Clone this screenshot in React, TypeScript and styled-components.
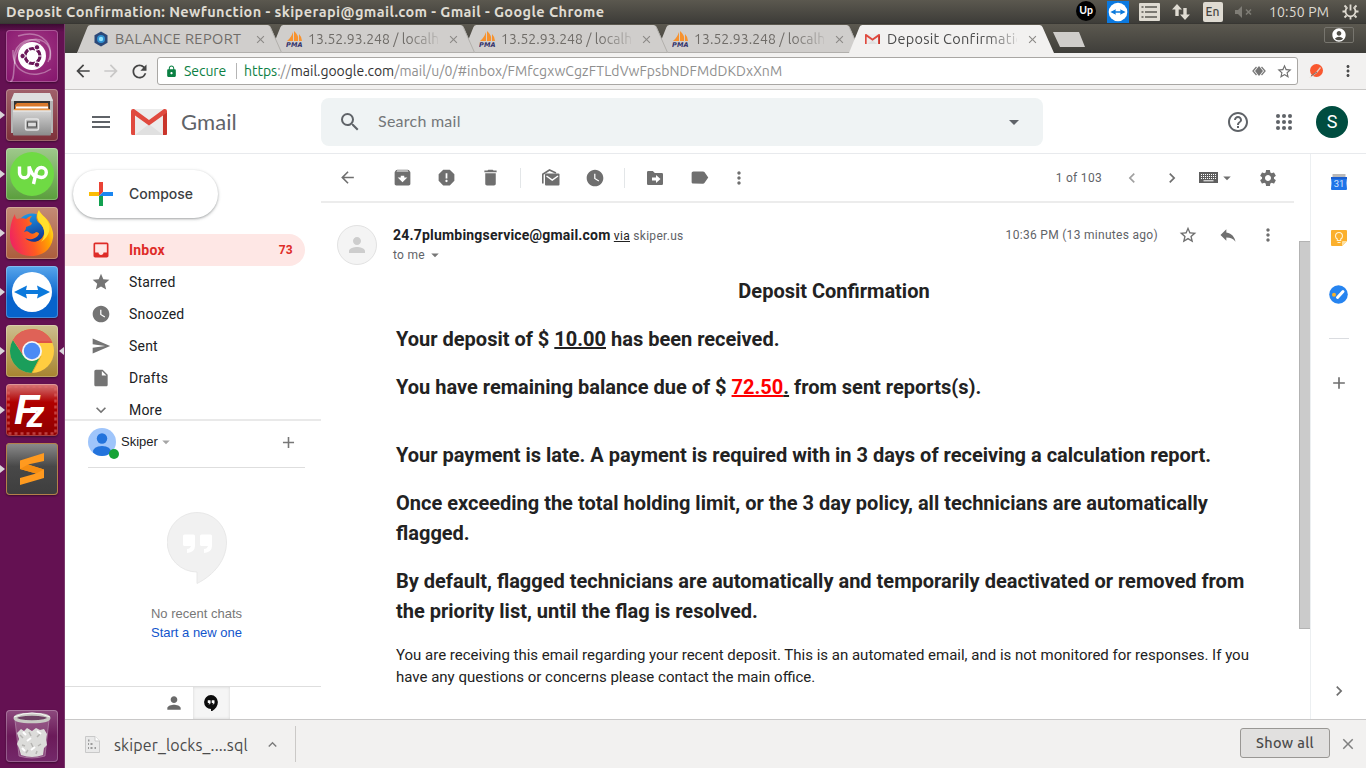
import React from 'react';
import styled, { createGlobalStyle } from 'styled-components';
import {
  MdAccountCircle, MdAdd, MdArchive, MdArrowBack, MdArrowDropDown, MdArrowForward, MdChevronLeft, MdChevronRight,
  MdClose, MdDelete, MdExpandLess, MdExpandMore, MdHelpOutline, MdInbox, MdInsertDriveFile, MdLabel,
  MdLock, MdMenu, MdMoreVert, MdPerson, MdRefresh, MdReply, MdReport, MdSearch, MdSend, MdSettings, MdStar,
  MdStarBorder, MdWatchLater,
} from 'react-icons/md';

const uiFont = '"Ubuntu", "Noto Sans", sans-serif';
const productFont = '"Product Sans", Lato, sans-serif';

const GlobalStyle = createGlobalStyle`
  * { box-sizing: border-box; }
  body { margin: 0; overflow: hidden; font-family: Roboto, sans-serif; color: #202124; }
  svg { display: block; flex: none; }
  p { margin: 0; }
`;

const Desktop = styled.div`
  display: grid;
  grid-template: 24px 744px / 65px 1301px;
  width: 1366px;
  height: 768px;
  overflow: hidden;
  background: #fff;
`;

/* ---------- system panel ---------- */
const Panel = styled.header`
  grid-column: 1 / 3;
  display: flex;
  align-items: center;
  padding: 0 4px 0 6px;
  background: linear-gradient(#5b584f, #3d3c38);
  border-bottom: 1px solid #383733;
  font-family: ${uiFont};
  color: #dfdbd2;
`;
const WindowTitle = styled.span`
  flex: 1;
  font-size: 14.5px;
  font-weight: 700;
  line-height: 22px;
  letter-spacing: 0.4px;
  white-space: nowrap;
`;
const Indicator = styled.span<{ $w?: number }>`
  display: flex;
  justify-content: center;
  align-items: center;
  width: ${p => p.$w ?? 31.6}px;
  height: 24px;
  font-size: 14px;
  letter-spacing: 0.15px;
  white-space: nowrap;
`;
const UpBadge = styled.span`
  width: 20px;
  height: 20px;
  margin-bottom: 2px;
  border-radius: 50%;
  background: #000;
  color: #fff;
  font: 700 10.5px/18px Lato, sans-serif;
  text-align: center;
`;
const Language = styled.span`
  width: 20px;
  height: 20px;
  border-radius: 2px;
  background: #dfdbd2;
  color: #45443f;
  font: 500 12px/20px ${uiFont};
  text-align: center;
`;

/* ---------- launcher ---------- */
const Launcher = styled.nav`
  display: flex;
  flex-direction: column;
  gap: 7px;
  padding: 6px 0 6px;
  background: linear-gradient(#3d0a33, #641152 8px);
  border-right: 1px solid #7b3a6d;
`;
const LaunchRow = styled.div<{ $last?: boolean }>`
  display: flex;
  align-items: center;
  justify-content: space-between;
  height: 52px;
  margin-top: ${p => (p.$last ? 'auto' : 0)};
`;
const Running = styled.i<{ $on?: boolean }>`
  width: 5px;
  height: 8px;
  visibility: ${p => (p.$on ? 'visible' : 'hidden')};
  background: #d9d4d8;
  clip-path: polygon(0 0, 100% 50%, 0 100%);
`;
const Focused = styled(Running)`
  clip-path: polygon(100% 0, 0 50%, 100% 100%);
`;
const Tile = styled.div<{ $bg: string; $edge?: string }>`
  width: 52px;
  height: 52px;
  overflow: hidden;
  border-radius: 4px;
  background: ${p => p.$bg};
  box-shadow: inset 0 0 0 1px ${p => p.$edge ?? 'rgba(255,255,255,.25)'}, 0 1px 2px rgba(0, 0, 0, 0.4);
`;

/* ---------- browser chrome ---------- */
const Browser = styled.div`
  display: flex;
  flex-direction: column;
  height: 744px;
  min-width: 0;
`;
const TabStrip = styled.div`
  display: flex;
  flex: none;
  height: 29px;
  padding: 1px 11px 0 12px;
  background: linear-gradient(#5b584f, #3f3e3a);
  font-family: ${uiFont};
`;
const TabBox = styled.div<{ $z: number; $active?: boolean }>`
  position: relative;
  z-index: ${p => p.$z};
  display: flex;
  align-items: center;
  width: 205px;
  height: 28px;
  margin-right: -12px;
  padding: 0 15px 0 16px;
  color: ${p => (p.$active ? '#4c4c4c' : '#6f6c68')};
`;
const TabShape = styled.svg`
  position: absolute;
  inset: 0;
  z-index: -1;
`;
const TabLabel = styled.span<{ $tight?: boolean }>`
  flex: 1;
  min-width: 0;
  margin: 0 8px 0 ${p => (p.$tight ? 5 : 6)}px;
  overflow: hidden;
  font-size: ${p => (p.$tight ? 14 : 14.5)}px;
  line-height: 26px;
  letter-spacing: ${p => (p.$tight ? 0.05 : 0.42)}px;
  white-space: nowrap;
  mask-image: linear-gradient(90deg, #000 98px, rgba(0, 0, 0, 0.25) 129px, transparent 130px);
`;
const PlainLabel = styled(TabLabel)`
  mask-image: none;
`;
const ActiveLabel = styled(TabLabel)`
  margin-left: 7px;
  letter-spacing: 0.25px;
`;
const NewTab = styled.div`
  width: 32px;
  height: 15px;
  margin: 7px 0 0 11px;
  background: #cfcdca;
  clip-path: polygon(0 0, 26px 0, 100% 100%, 7px 100%);
`;
const ProfileButton = styled.div`
  display: flex;
  justify-content: center;
  align-items: center;
  width: 30px;
  height: 16px;
  margin: 2px 1px 0 auto;
  border: 1px solid #77756e;
  border-radius: 2px;
  color: #fff;
`;
const Toolbar = styled.div`
  display: flex;
  align-items: center;
  flex: none;
  height: 37px;
  padding: 0 9px 0 8px;
  background: #f2f1f0;
  border-bottom: 1px solid #cac8c6;
  color: #4b4b4b;
`;
const NavIcon = styled.span<{ $dim?: boolean }>`
  display: flex;
  width: 28px;
  color: ${p => (p.$dim ? '#c9c8c7' : '#454545')};
`;
const Omnibox = styled.div`
  display: flex;
  align-items: center;
  width: 1141px;
  height: 28px;
  padding: 0 5px 0 7px;
  background: #fff;
  border: 1px solid #a9a7a4;
  border-radius: 3px;
  font: 14px/26px ${uiFont};
  white-space: nowrap;
`;
const Secure = styled.span`
  width: 53px;
  margin-left: 6px;
  border-right: 1px solid #b5b5b5;
  line-height: 16px;
  letter-spacing: -0.05px;
  color: #0b8043;
`;
const Url = styled.span`
  flex: 1;
  margin-left: 7px;
  color: #333;
  letter-spacing: -0.03px;
`;
const Scheme = styled.span`color: #0b8043;`;
const Muted = styled.span`color: #8f8f8f;`;
const Path = styled(Muted)`letter-spacing: 0.08px;`;
const Extensions = styled.div`
  display: flex;
  flex: 1;
  justify-content: space-between;
  align-items: center;
  padding-left: 11px;
`;

/* ---------- Gmail ---------- */
const Page = styled.div`
  display: flex;
  flex-direction: column;
  height: 629px;
  overflow: hidden;
`;
const GmailHeader = styled.div`
  display: flex;
  align-items: center;
  flex: none;
  height: 64px;
  border-bottom: 1px solid #e8eaed;
  color: #5f6368;
`;
const Brand = styled.div`
  display: flex;
  align-items: center;
  width: 256px;
  padding: 1px 0 0 24px;
`;
const BrandName = styled.span`
  margin-left: 14px;
  font: 22px/28px ${productFont};
  letter-spacing: 0.1px;
`;
const SearchBox = styled.div`
  display: flex;
  align-items: center;
  width: 722px;
  height: 48px;
  padding: 0 17px;
  border-radius: 8px;
  background: #eff3f4;
  font: 16px/24px ${productFont};
  letter-spacing: 0.25px;
`;
const SearchText = styled.span`
  flex: 1;
  margin-left: 16px;
  padding-bottom: 2px;
  color: #747779;
`;
const HeaderActions = styled.div`
  display: flex;
  align-items: center;
  margin-left: auto;
  padding-right: 18px;
`;
const Account = styled.div`
  width: 32px;
  height: 32px;
  margin-left: 9px;
  border-radius: 50%;
  background: #004d40;
  color: #fff;
  font: 18px/32px Roboto, sans-serif;
  text-align: center;
`;
const Columns = styled.div`
  display: grid;
  grid-template-columns: 256px 990px 55px;
  flex: 1;
  min-height: 0;
`;
const Sidebar = styled.aside`
  display: flex;
  flex-direction: column;
  min-height: 0;
`;
const Compose = styled.button`
  display: flex;
  align-items: center;
  flex: none;
  width: 145px;
  height: 48px;
  margin: 16px 0 16px 8px;
  padding: 0 0 1px 16px;
  border: 0;
  border-radius: 24px;
  background: #fff;
  box-shadow: 0 1px 2px rgba(60, 64, 67, 0.32), 0 1px 3px 1px rgba(60, 64, 67, 0.14);
  color: #3c4043;
  font: 500 14px/20px Inter, sans-serif;
  gap: 16px;
`;
const Folders = styled.div`
  height: 187px;
  flex: none;
  overflow: hidden;
  border-bottom: 2px solid #e9e9e9;
`;
const Folder = styled.div<{ $active?: boolean }>`
  display: flex;
  align-items: center;
  width: 240px;
  height: 32px;
  padding: 0 12px 0 26px;
  border-radius: 0 16px 16px 0;
  background: ${p => (p.$active ? '#fee7e5' : 'transparent')};
  color: ${p => (p.$active ? '#de2c28' : '#202124')};
  font-size: 14px;
  font-weight: ${p => (p.$active ? 700 : 400)};
  letter-spacing: 0.2px;
  & > svg { color: ${p => (p.$active ? '#de2c28' : '#747474')}; }
`;
const FolderName = styled.span`flex: 1; margin-left: 18px;`;
const Count = styled.span`font-size: 12px; letter-spacing: 0.3px;`;
const ChatHeader = styled.div`
  display: flex;
  align-items: center;
  flex: none;
  width: 217px;
  height: 47px;
  margin-left: 23px;
  padding-bottom: 4px;
  border-bottom: 1px solid #dedede;
  font: 13px/18px "Liberation Sans", Arial, sans-serif;
`;
const ChatAvatar = styled.span`
  position: relative;
  display: block;
  width: 28px;
  height: 28px;
  margin-right: 5px;
`;
const Presence = styled.i`
  position: absolute;
  right: -3px;
  bottom: -3px;
  width: 10px;
  height: 10px;
  border-radius: 50%;
  background: #16a336;
`;
const ChatEmpty = styled.div`
  display: flex;
  flex: 1;
  flex-direction: column;
  align-items: center;
  padding: 44px 0 0 7px;
  font: 13px/19px "Liberation Sans", Arial, sans-serif;
  color: #777;
`;
const ChatText = styled.span`margin-top: 20px;`;
const ChatLink = styled.a`color: #1155cc;`;
const ChatTabs = styled.div`
  display: flex;
  justify-content: center;
  flex: none;
  height: 33px;
  border-top: 1px solid #dedede;
`;
const ChatTab = styled.div<{ $active?: boolean }>`
  display: flex;
  justify-content: center;
  align-items: center;
  width: 37px;
  margin-left: ${p => (p.$active ? 0 : -1)}px;
  background: ${p => (p.$active ? '#f5f5f5' : 'none')};
  box-shadow: ${p => (p.$active ? 'inset 0 0 3px #d5d5d5' : 'none')};
  color: ${p => (p.$active ? '#000' : '#6a6a6a')};
`;

const Mail = styled.main`
  position: relative;
  border-right: 1px solid #eceff1;
  min-width: 0;
`;
const Actions = styled.div`
  display: flex;
  align-items: center;
  width: 973px;
  height: 49px;
  padding: 0 4px;
  border-bottom: 2px solid #ececec;
  color: #6f6f6f;
`;
const Slot = styled.span<{ $w?: number; $gap?: number; $tone?: string }>`
  display: flex;
  justify-content: center;
  align-items: center;
  flex: none;
  width: ${p => p.$w ?? 44}px;
  margin-left: ${p => p.$gap ?? 0}px;
  color: ${p => p.$tone ?? '#6f6f6f'};
`;
const Divider = styled.i`
  width: 1px;
  height: 20px;
  margin: 0 8px 0 7px;
  background: #e3e6e8;
`;
const FirstDivider = styled(Divider)`margin-left: 8px;`;
const Counter = styled.span`
  margin: 0 10px 0 auto;
  font-size: 12px;
  letter-spacing: 0.3px;
  color: #5f6368;
`;
const MessageHead = styled.div`
  display: flex;
  width: 973px;
  height: 60px;
  padding: 22px 6px 0 16px;
  font-size: 12px;
  letter-spacing: 0.3px;
  color: #5f6368;
`;
const SenderAvatar = styled.div`
  display: flex;
  justify-content: center;
  align-items: center;
  width: 40px;
  height: 40px;
  border: 1px solid #e2e2e2;
  border-radius: 50%;
  background: #f4f4f4;
  color: #cdcdcd;
`;
const Sender = styled.div`
  flex: 1;
  margin-left: 16px;
  line-height: 20px;
`;
const Address = styled.b`
  font-size: 14px;
  letter-spacing: 0.2px;
  color: #202124;
`;
const Via = styled.u`color: #222;`;
const Recipient = styled.div`
  display: flex;
  align-items: center;
  gap: 1px;
  height: 18px;
`;
const HeadTools = styled.div`
  display: flex;
  align-items: center;
  height: 20px;
`;
const Body = styled.article`
  width: 876px;
  margin: 13px 0 0 75px;
  color: #222;
`;
const Strong = styled.p<{ $center?: boolean; $gap?: number }>`
  margin-bottom: ${p => p.$gap ?? 18}px;
  font-size: 20px;
  font-weight: 700;
  line-height: 30px;
  text-align: ${p => (p.$center ? 'center' : 'left')};
`;
const Due = styled.u`color: #f00;`;
const Footnote = styled.p`
  font-size: 15px;
  line-height: 22px;
`;
const ScrollThumb = styled.i`
  position: absolute;
  top: 87px;
  right: 0;
  width: 11px;
  height: 388px;
  background: #cbcbcb;
  border: solid #b3b3b3;
  border-width: 1px 0 1px 1px;
`;
const AddOns = styled.aside`
  display: flex;
  flex-direction: column;
  align-items: center;
  padding: 18px 0;
  color: #6f6f6f;
`;
const AddOnSlot = styled.div`
  display: flex;
  align-items: center;
  height: 20px;
  margin-bottom: 36px;
`;
const AddOnRule = styled.i`
  width: 20px;
  height: 1px;
  margin: -2px 0 34px;
  background: #dadce0;
`;
const Collapse = styled.div`margin-top: auto;`;

/* ---------- download shelf ---------- */
const Shelf = styled.footer`
  display: flex;
  align-items: center;
  flex: none;
  height: 49px;
  padding: 0 9px 0 20px;
  background: #f2f1f0;
  border-top: 1px solid #c9c8c8;
  color: #4b4b4b;
  font-family: ${uiFont};
`;
const FileName = styled.span`
  margin: 1px 16px 0 14px;
  font-size: 16px;
  letter-spacing: 0.13px;
`;
const ShelfRule = styled.i`
  width: 1px;
  height: 36px;
  margin-left: 14px;
  background: #cbc9c7;
`;
const ShowAll = styled.button`
  width: 90px;
  height: 30px;
  margin: 0 9px 2px auto;
  padding: 0;
  border: 1px solid #999794;
  border-radius: 3px;
  background: #e1e0df;
  color: #4b4b4b;
  font: 500 14.5px/26px ${uiFont};
  letter-spacing: 0.35px;
`;

/* ---------- drawings ---------- */
const TeamArrows = ({ size, square }: { size: number; square?: boolean }) => (
  <svg width={size} height={size} viewBox="0 0 52 52">
    {square && <rect width="52" height="52" fill="#0b79e0" />}
    <circle cx="26" cy="26" r={square ? 22 : 20} fill="#fff" />
    <path d="M8 26l13-6.5-1 4.500h12l-1-4.500L44 26l-13 6.500 1-4.500H20l1 4.500z" fill="#0b79dc" />
  </svg>
);
const Ubuntu = () => (
  <svg width="52" height="52" viewBox="0 0 52 52">
    <g fill="none" stroke="#fff" strokeOpacity=".35" strokeWidth="1.500">
      <path d="M4 52C12 50 2 22 20 12c14-7 27 1 24 18" />
      <path d="M7 20c-1 24 22 30 38 19M12 6c26-8 38 12 30 26" />
      <path d="M9 34C4 18 20 4 34 12" />
    </g>
    <circle cx="26" cy="26" r="14" fill="#fff" />
    <circle cx="26.500" cy="26" r="7.500" fill="none" stroke="#6b1759" strokeWidth="3.200" />
    <path d="M26.500 26L32 35.500M26.500 26H15M26.500 26L32 16.500" stroke="#fff" strokeWidth="1.200" />
    <path d="M26.500 26H38M26.500 26l-6-10M26.500 26l-6 10" stroke="#fff" strokeWidth="1.200" />
    <circle cx="26.500" cy="26" r="5.500" fill="#fff" />
    <g fill="#6b1759" stroke="#fff" strokeWidth="1"><circle cx="16.600" cy="26" r="2.700" /><circle cx="31" cy="17.300" r="2.700" /><circle cx="31" cy="34.700" r="2.700" /></g>
  </svg>
);
const Files = () => (
  <svg width="52" height="52" viewBox="0 0 52 52">
    <defs><linearGradient id="cab" x2="0" y2="1"><stop stopColor="#d4d4d4" /><stop offset="1" stopColor="#8b8b8b" /></linearGradient></defs>
    <path d="M8 5h36l3 6v33H5V11z" fill="#b5b5b5" />
    <path d="M8 4h36l3 8H5z" fill="#dedede" />
    <rect x="8" y="12" width="36" height="11" fill="#333" />
    <path d="M9 16l2-2h31l1 9H9z" fill="#d9792c" />
    <rect x="10" y="17.500" width="32" height="2" fill="#fff" />
    <path d="M8 20h36v3H8z" fill="#e8933f" />
    <rect x="7" y="21.500" width="38" height="25" rx="1" fill="url(#cab)" />
    <path d="M7 22h38" stroke="#eee" />
    <rect x="19.500" y="30" width="13" height="11" rx="1.500" fill="none" stroke="#e5e5e5" strokeWidth="1.500" />
    <rect x="21.500" y="33" width="9" height="5" fill="#ddd" stroke="#555" strokeWidth="1.200" />
  </svg>
);
const Upwork = () => (
  <svg width="52" height="52" viewBox="0 0 52 52">
    <circle cx="26" cy="26" r="22" fill="#6fda44" />
    <path d="M13.500 18.500v6.500a4.800 4.800 0 0 0 9.600 0v-6.500c2 6 4 9.500 7 11M27.500 36l2.500-11c.8-3.800 3-5.500 5.300-5.500a5 5 0 1 1 0 10c-2.800 0-5-1.500-7-4" fill="none" stroke="#fff" strokeWidth="3.400" />
  </svg>
);
const Firefox = () => (
  <svg width="52" height="52" viewBox="0 0 52 52">
    <defs>
      <linearGradient id="fox" x1="0" y1=".6" x2="1" y2=".3"><stop stopColor="#f0255f" /><stop offset=".45" stopColor="#ff5a22" /><stop offset=".8" stopColor="#ffa400" /><stop offset="1" stopColor="#ffe226" /></linearGradient>
      <linearGradient id="globe" x2=".3" y2="1"><stop stopColor="#1ea2f2" /><stop offset="1" stopColor="#12348f" /></linearGradient>
    </defs>
    <circle cx="26" cy="22" r="15.500" fill="url(#globe)" />
    <path d="M9 7c0 3 1 4 2 5 3-1 7-1 9 0 2-2 4-3 6-3-2 2-3 4-2 6l2 1-1 2-5 2c0 3-1 3-2 5 2-1 4-1 6 1 2 1 4 1 6-1 2 0 3 1 3 2-3 6-11 6-14 4 6 6 16 5 19-4 1-5-2-9-6-12-3-4-1-9 1-12 1 5 8 7 11 14 2 5 4 9 3 14-2 13-12 18-22 18C12 49 3 40 4 27c0-8 2-15 5-20z" fill="url(#fox)" />
    <path d="M33 3c-3 5-2 9 1 13 5 5 6 13 1 19 9-6 10-14 7-20-2-5-8-8-9-12z" fill="#ffe02d" />
  </svg>
);
const Chrome = () => (
  <svg width="52" height="52" viewBox="0 0 52 52">
    <circle cx="26" cy="26" r="22" fill="#ffcd40" />
    <path d="M6.950 15A22 22 0 0 1 46.500 18H26a9 9 0 0 0-8.500 5z" fill="#dd5347" />
    <path d="M6.950 15A22 22 0 0 0 26 48l8-15-4 2a10 10 0 0 1-13-5z" fill="#1b9e5b" />
    <path d="M26 16h19.500a22 22 0 0 0-38.500-1l10 15z" fill="#df6257" />
    <path d="M26 48l9-17" stroke="#e0ad2e" />
    <circle cx="26" cy="26" r="10" fill="#f5f5f5" />
    <circle cx="26" cy="26" r="8.200" fill="#4c8bf5" />
  </svg>
);
const FileZilla = () => (
  <svg width="52" height="52" viewBox="0 0 52 52">
    <rect x="2.500" y="2.500" width="47" height="47" fill="none" stroke="#e06a6a" strokeWidth="2.500" strokeDasharray="3 3" opacity=".6" />
    <text x="8" y="40" fill="#fff" fontFamily="'Liberation Sans', Arial, sans-serif" fontSize="42" fontWeight="700" fontStyle="italic">
      F<tspan x="20.500" y="43" fontSize="36">z</tspan>
    </text>
  </svg>
);
const Sublime = () => (
  <svg width="52" height="52" viewBox="0 0 52 52">
    <path d="M38 10L14 17.500V26l16 4.500L14 35v7l24-7v-8.500L22 21.500 38 18z" fill="#ff9a1f" />
    <path d="M38 26.500L22 21.500l-8 4.500 16 4.500z" fill="#f58d12" />
  </svg>
);
const Trash = () => (
  <svg width="52" height="52" viewBox="0 0 52 52">
    <path d="M9 10l4 36q13 4 26 0l4-36z" fill="#b98eae" fillOpacity=".35" stroke="#c9a9c1" strokeOpacity=".5" />
    <path d="M11 23l4-4 3 2 3-3 5 3 4-3 4 2 4-1 3 5-1 6 1 5-3 3-1 7q-11 4-22 0l-2-7-2-4 2-5z" fill="#dcdcda" />
    <path d="M14 25l3 3M23 22l2 4M34 24l-3 3M16 35l3 1M25 33l2 4M35 34l-3 2M20 43l2-3M30 44l1-3" stroke="#b5b4b1" strokeWidth="1.500" fill="none" />
    <path d="M17 22l3 3M31 21l4 3M21 31l4-3M25 40l4-3M16 38l3 3" stroke="#fff" strokeWidth="2" />
    <ellipse cx="26" cy="8" rx="17" ry="3.800" fill="#6d4163" stroke="#c9c9c4" strokeWidth="3" />
    <path d="M8 7q18-8 36 0" stroke="#f6f6f4" fill="none" />
  </svg>
);
const GmailMark = ({ width }: { width: number }) => (
  <svg width={width} height={width * 0.722} viewBox="0 0 36 26">
    <path d="M2 0h32v26H2z" fill="#ececec" />
    <path d="M4 26l14-11 14 11z" fill="#e0e0e0" />
    <path d="M0 2v22.500Q0 26 1.500 26H4V6.500L18 16.500 32 6.500V26h2.500q1.500 0 1.500-1.500V2Q36 0 34 0h-1L18 11 3 0H2Q0 0 0 2z" fill="#e04a3f" />
    <path d="M32 6.500l4-3V24.500Q36 26 34.500 26H32z" fill="#c9352b" />
  </svg>
);
const PmaMark = () => (
  <svg width="17" height="16" viewBox="0 0 17 16">
    <path d="M7 1v9H1Q5 7 7 1zM8 0q5 4 4 10H8zM13 3q3 3 3 7h-3z" fill="#f7922e" />
    <text x="0" y="15.500" fontFamily="'DejaVu Sans', sans-serif" fontSize="6.500" fontWeight="700" fontStyle="italic" fill="#33336b" textLength="16.500">PMA</text>
  </svg>
);
const HexMark = () => (
  <svg width="16" height="16" viewBox="0 0 16 16">
    <path d="M8 .5l6.500 3.750v7.500L8 15.500 1.500 11.750v-7.500z" fill="#2c4878" />
    <circle cx="8" cy="8" r="4" fill="#2f8fd0" /><circle cx="8" cy="8" r="2.200" fill="#8fe3ff" />
  </svg>
);
const ComposePlus = () => (
  <svg width="24" height="24" viewBox="0 0 24 24">
    <path d="M10 0h4v10l-4 4z" fill="#ea4335" /><path d="M0 10h10v4H0z" fill="#fbbc04" />
    <path d="M14 10h10v4H10z" fill="#1a86f0" /><path d="M10 14h4v10h-4z" fill="#12a150" />
  </svg>
);
const Apps = () => (
  <svg width="18" height="18" viewBox="0 0 18 18" fill="#5f6368">
    {[3, 9, 15].map(y => [3, 9, 15].map(x => <circle key={`${x}${y}`} cx={x} cy={y} r="2.050" />))}
  </svg>
);
const Unread = () => (
  <svg width="20" height="20" viewBox="0 0 20 20">
    <path d="M1.800 15.500V6.300L8.500 2l6.500 3" fill="none" stroke="#6f6f6f" strokeWidth="1.600" />
    <path d="M5 5.500h12.500q1 0 1 1v10q0 1-1 1H5q-1 0-1-1v-10q0-1 1-1z" fill="#6f6f6f" />
    <path d="M5.500 8l5.750 4L17 8" fill="none" stroke="#fff" strokeWidth="1.500" />
  </svg>
);
const MoveTo = () => (
  <svg width="20" height="20" viewBox="0 0 20 20">
    <path d="M3.300 3h4.500l2 2h7q1.200 0 1.200 1.200v9.600q0 1.200-1.200 1.200H3.300Q2 17 2 15.800V4.200Q2 3 3.300 3z" fill="#6f6f6f" />
    <path d="M7 9.500h4V7l4.500 4-4.500 4v-2.500H7z" fill="#fff" />
  </svg>
);
const Keyboard = () => (
  <svg width="19" height="11" viewBox="0 0 19 11">
    <rect width="19" height="11" fill="#5f5f5f" />
    <path d="M2 2.500h15M2 4.500h15M2 6.500h15" stroke="#fff" strokeWidth="1" strokeDasharray="1 1" />
    <path d="M4.500 8.800h10" stroke="#fff" strokeWidth="1" />
  </svg>
);
const Calendar = () => (
  <svg width="16" height="17" viewBox="0 0 16 17">
    <path d="M1.500 0h13v4h-13z" fill="#b9b9b9" />
    <path d="M0 4q0-1 1-1h14q1 0 1 1l-.5 5 .5 6q0 1-1 1H1q-1 0-1-1l.5-6z" fill="#1f74e8" />
    <path d="M0 3h16v2H0z" fill="#1a5fd0" />
    <text x="8" y="13" textAnchor="middle" fontFamily="Roboto, sans-serif" fontSize="9.500" fill="#d5e6ff">31</text>
  </svg>
);
const Keep = () => (
  <svg width="16" height="16" viewBox="0 0 16 16">
    <path d="M1 0h14q1 0 1 1v10l-5 5H1q-1 0-1-1V1q0-1 1-1z" fill="#fbb02d" /><path d="M11 16v-4q0-1 1-1h4z" fill="#fde0a0" />
    <path d="M6.300 10.500V9a3.500 3.500 0 1 1 3.400 0v1.500zM6.500 12.500h3" fill="none" stroke="#fff3d6" strokeWidth="1.100" />
  </svg>
);
const Tasks = () => (
  <svg width="19" height="19" viewBox="0 0 19 19">
    <circle cx="9.500" cy="9.500" r="9.300" fill="#2684f0" /><path d="M8.500 12.500l5.500-6" stroke="#fff" strokeWidth="3" strokeLinecap="round" />
    <circle cx="5" cy="9.700" r="2" fill="#f8b32c" />
  </svg>
);
const Hangouts = ({ width, fill, quote, stroke = 'none' }: { width: number; fill: string; quote: string; stroke?: string }) => (
  <svg width={width} height={width * 1.2} viewBox="0 0 60 72">
    <path d="M30 .5a29.500 29.500 0 0 0 0 59.500v11.500C47 63 59.500 48 59.500 30A29.500 29.500 0 0 0 30 .5z" fill={fill} stroke={stroke} />
    {[16, 33].map(x => (
      <path key={x} d={`M${x + 1.5} 22.500h9q1.500 0 1.500 1.500v10q0 6-8 7v-4q3 0 4-3h-6.500q-1.500 0-1.500-1.500v-8.500q0-1.500 1.500-1.500z`} fill={quote} />
    ))}
  </svg>
);
const Postman = () => (
  <svg width="14" height="15" viewBox="0 0 14 15">
    <circle cx="7.500" cy="6.500" r="6.500" fill="#f9582f" />
    <path d="M0 14l7-6 4-5 1 1-4 5-5 3.500z" fill="#e8c9bd" /><path d="M2 12l6-4" stroke="#7a6a64" />
  </svg>
);
const Viewer = () => (
  <svg width="14" height="12" viewBox="0 0 14 12">
    <path d="M4.500 2L1 6l3.500 4M9.500 2L13 6l-3.500 4" fill="none" stroke="#7b7b7b" strokeWidth="1.300" />
    <path d="M7 1l4 5-4 5-4-5z" fill="#757575" />
  </svg>
);
const SqlFile = () => (
  <svg width="15" height="17" viewBox="0 0 15 17">
    <path d="M.5.500h9.500l4.500 4.500v11.500H.5z" fill="#e9e9e9" stroke="#c9c9c9" /><path d="M10 .5V5h4.500" fill="#fff" stroke="#c9c9c9" />
    <path d="M3 4.500h1.500M3 8h1M5.500 8h2M3 12h1M5.500 12h2M9.500 12h1.500" stroke="#9a9a9a" strokeWidth="2" />
  </svg>
);
const ListIcon = () => (
  <svg width="21" height="20" viewBox="0 0 21 20">
    <rect y="1" width="21" height="18" rx="1" fill="#dfdbd2" />
    <path d="M2.500 5h2M6 5h12M2.500 10h2M6 10h12M2.500 15h2M6 15h12" stroke="#5a5851" strokeWidth="1.600" />
  </svg>
);
const Network = () => (
  <svg width="18" height="16" viewBox="0 0 18 16" fill="#dfdbd2">
    <path d="M5 0l5 5.500H6.700V12H3.300V5.500H0zM13 16l-5-5.500h3.300V4h3.400v6.500H18z" />
  </svg>
);
const Volume = () => (
  <svg width="18" height="12" viewBox="0 0 18 12">
    <path d="M0 4h3l4-4v12L3 8H0z" fill="#7f7d76" /><path d="M11 3.500l5 5M16 3.500l-5 5" stroke="#7f7d76" strokeWidth="1.500" />
  </svg>
);
const Power = () => (
  <svg width="17" height="17" viewBox="0 0 17 17" fill="none" stroke="#dfdbd2">
    <path d="M5.500 4.400a5 5 0 1 0 6 0M8.500 1.500v6" strokeWidth="1.800" />
    <path d="M.5 8.500h3M13.500 8.500h3M8.500 14v2.500M2.500 2.500l2 2M14.500 2.500l-2 2M2.500 14.500l2-2M14.500 14.500l-2-2" strokeWidth="1.800" />
  </svg>
);

const gloss = (top: string, bottom: string) => `linear-gradient(${top}, ${bottom})`;
const launchers = [
  { name: 'dash', icon: <Ubuntu />, bg: 'radial-gradient(circle at 50% 40%, #a43b86, #84146c)' },
  { name: 'files', icon: <Files />, bg: gloss('#a0606a', '#7d3039'), on: true },
  { name: 'upwork', icon: <Upwork />, bg: gloss('#9fc98c', '#5a9e3c'), on: true },
  { name: 'firefox', icon: <Firefox />, bg: gloss('#c48c76', '#ab5d3c'), on: true },
  { name: 'teamviewer', icon: <TeamArrows size={52} />, bg: gloss('#58a6ec', '#0763cc 60%'), on: true },
  { name: 'chrome', icon: <Chrome />, bg: gloss('#cdbf8f', '#a7842f'), on: true, focus: true },
  { name: 'filezilla', icon: <FileZilla />, bg: gloss('#d57878', '#b00000 35%, #8d0000'), on: true },
  { name: 'sublime', icon: <Sublime />, bg: gloss('#8d8d8d', '#484848 45%, #3e3e3e'), edge: '#b4804a', on: true },
];

const tabs = ['BALANCE REPORT', '13.52.93.248 / localhost', '13.52.93.248 / localhost', '13.52.93.248 / localhost', 'Deposit Confirmation'];

const Tab = ({ label, index }: { label: string; index: number }) => {
  const active = index === 4;
  const Label = index === 0 ? PlainLabel : active ? ActiveLabel : TabLabel;
  return (
    <TabBox $z={active ? 9 : 5 - index} $active={active}>
      <TabShape width="205" height="28" viewBox="0 0 205 28">
        <path d="M0 28L10.500 2Q11.300 0 13.500 0H190.500Q192.500 0 193.500 2L205 28z" fill={active ? '#f2f1f0' : '#d0cecc'} />
        {!active && <path d="M.5 27.500H204.500L193 1.500" fill="none" stroke="#b1afac" />}
      </TabShape>
      {index === 0 ? <HexMark /> : active ? <GmailMark width={15} /> : <PmaMark />}
      <Label $tight={index > 0 && !active}>{label}</Label>
      <MdClose size={13} color="#8b8986" />
    </TabBox>
  );
};

const folders = [
  { name: 'Inbox', icon: <MdInbox size={20} />, count: 73 },
  { name: 'Starred', icon: <MdStar size={20} /> },
  { name: 'Snoozed', icon: <MdWatchLater size={20} /> },
  { name: 'Sent', icon: <MdSend size={20} /> },
  { name: 'Drafts', icon: <MdInsertDriveFile size={20} /> },
  { name: 'More', icon: <MdExpandMore size={20} /> },
];

export default function App() {
  return (
    <Desktop>
      <GlobalStyle />
      <Panel>
        <WindowTitle>Deposit Confirmation: Newfunction - skiperapi@gmail.com - Gmail - Google Chrome</WindowTitle>
        <Indicator><UpBadge>Up</UpBadge></Indicator>
        <Indicator><TeamArrows size={22} square /></Indicator>
        <Indicator><ListIcon /></Indicator>
        <Indicator><Network /></Indicator>
        <Indicator><Language>En</Language></Indicator>
        <Indicator><Volume /></Indicator>
        <Indicator $w={78}>10:50 PM</Indicator>
        <Indicator $w={24}><Power /></Indicator>
      </Panel>

      <Launcher>
        {launchers.map(l => (
          <LaunchRow key={l.name}>
            <Running $on={l.on} />
            <Tile $bg={l.bg} $edge={l.edge}>{l.icon}</Tile>
            <Focused $on={l.focus} />
          </LaunchRow>
        ))}
        <LaunchRow $last>
          <Running />
          <Tile $bg="linear-gradient(#8d4a7e, #6b1a59 50%, #74296a)"><Trash /></Tile>
          <Focused />
        </LaunchRow>
      </Launcher>

      <Browser>
        <TabStrip>
          {tabs.map((label, i) => <Tab key={i} label={label} index={i} />)}
          <NewTab />
          <ProfileButton><MdAccountCircle size={16} /></ProfileButton>
        </TabStrip>
        <Toolbar>
          <NavIcon><MdArrowBack size={20} /></NavIcon>
          <NavIcon $dim><MdArrowForward size={20} /></NavIcon>
          <NavIcon><MdRefresh size={21} /></NavIcon>
          <Omnibox>
            <MdLock size={13} color="#0b8043" />
            <Secure>Secure</Secure>
            <Url><Scheme>https</Scheme><Muted>://</Muted>mail.google.com<Path>/mail/u/0/#inbox/FMfcgxwCgzFTLdVwFpsbNDFMdDKDxXnM</Path></Url>
            <Viewer />
            <Slot $w={16} $gap={10}><MdStarBorder size={17} /></Slot>
          </Omnibox>
          <Extensions><Postman /><MdMoreVert size={18} /></Extensions>
        </Toolbar>

        <Page>
          <GmailHeader>
            <Brand>
              <MdMenu size={24} />
              <Slot $w={36} $gap={18}><GmailMark width={36} /></Slot>
              <BrandName>Gmail</BrandName>
            </Brand>
            <SearchBox>
              <MdSearch size={24} />
              <SearchText>Search mail</SearchText>
              <MdArrowDropDown size={24} />
            </SearchBox>
            <HeaderActions>
              <Slot $w={46} $tone="#5f6368"><MdHelpOutline size={24} /></Slot>
              <Slot $w={46}><Apps /></Slot>
              <Account>S</Account>
            </HeaderActions>
          </GmailHeader>

          <Columns>
            <Sidebar>
              <Compose><ComposePlus />Compose</Compose>
              <Folders>
                {folders.map(f => (
                  <Folder key={f.name} $active={f.name === 'Inbox'}>
                    {f.icon}
                    <FolderName>{f.name}</FolderName>
                    {f.count && <Count>{f.count}</Count>}
                  </Folder>
                ))}
              </Folders>
              <ChatHeader>
                <ChatAvatar>
                  <svg width="28" height="28" viewBox="0 0 28 28">
                    <circle cx="14" cy="14" r="14" fill="#9fc5fb" />
                    <circle cx="14" cy="10.500" r="5.200" fill="#2373dc" />
                    <path d="M5 24.500q0-6.500 9-6.500t9 6.500q-4 3.500-9 3.500t-9-3.500z" fill="#2373dc" />
                  </svg>
                  <Presence />
                </ChatAvatar>
                Skiper
                <Slot $w={16} $tone="#a5a5a5"><MdArrowDropDown size={18} /></Slot>
                <Slot $w={32} $gap={99} $tone="#777"><MdAdd size={19} /></Slot>
              </ChatHeader>
              <ChatEmpty>
                <Hangouts width={60} fill="#f1f1f1" quote="#fff" stroke="#e8e8e8" />
                <ChatText>No recent chats</ChatText>
                <ChatLink>Start a new one</ChatLink>
              </ChatEmpty>
              <ChatTabs>
                <ChatTab><MdPerson size={20} /></ChatTab>
                <ChatTab $active><Hangouts width={14} fill="#0c0c0c" quote="#fff" /></ChatTab>
              </ChatTabs>
            </Sidebar>

            <Mail>
              <Actions>
                <Slot><MdArrowBack size={19} /></Slot>
                <Slot $gap={11}><MdArchive size={21} /></Slot>
                <Slot><MdReport size={21} /></Slot>
                <Slot><MdDelete size={21} /></Slot>
                <FirstDivider />
                <Slot><Unread /></Slot>
                <Slot><MdWatchLater size={20} /></Slot>
                <Divider />
                <Slot><MoveTo /></Slot>
                <Slot><MdLabel size={21} /></Slot>
                <Slot $w={36}><MdMoreVert size={20} /></Slot>
                <Counter>1 of 103</Counter>
                <Slot $w={40} $tone="#a0a0a0"><MdChevronLeft size={20} /></Slot>
                <Slot $w={40}><MdChevronRight size={20} /></Slot>
                <Slot $w={50}><Keyboard /><MdArrowDropDown size={18} /></Slot>
                <Slot $gap={4}><MdSettings size={20} /></Slot>
              </Actions>
              <MessageHead>
                <SenderAvatar><MdPerson size={24} /></SenderAvatar>
                <Sender>
                  <div><Address>24.7plumbingservice@gmail.com</Address> <Via>via</Via> skiper.us</div>
                  <Recipient>to me<MdArrowDropDown size={18} color="#777" /></Recipient>
                </Sender>
                <HeadTools>
                  10:36 PM (13 minutes ago)
                  <Slot $w={40} $gap={10}><MdStarBorder size={20} /></Slot>
                  <Slot $w={40}><MdReply size={20} /></Slot>
                  <Slot $w={40}><MdMoreVert size={20} /></Slot>
                </HeadTools>
              </MessageHead>
              <Body>
                <Strong $center>Deposit Confirmation</Strong>
                <Strong>Your deposit of $ <u>10.00</u> has been received.</Strong>
                <Strong $gap={38}>You have remaining balance due of $ <Due>72.50</Due><u>.</u> from sent reports(s).</Strong>
                <Strong>Your payment is late. A payment is required with in 3 days of receiving a calculation report.</Strong>
                <Strong>Once exceeding the total holding limit, or the 3 day policy, all technicians are automatically flagged.</Strong>
                <Strong>By default, flagged technicians are automatically and temporarily deactivated or removed from the priority list, until the flag is resolved.</Strong>
                <Footnote>You are receiving this email regarding your recent deposit. This is an automated email, and is not monitored for responses. If you have any questions or concerns please contact the main office.</Footnote>
              </Body>
              <ScrollThumb />
            </Mail>

            <AddOns>
              <AddOnSlot><Calendar /></AddOnSlot>
              <AddOnSlot><Keep /></AddOnSlot>
              <AddOnSlot><Tasks /></AddOnSlot>
              <AddOnRule />
              <MdAdd size={20} />
              <Collapse><MdChevronRight size={20} /></Collapse>
            </AddOns>
          </Columns>
        </Page>

        <Shelf>
          <SqlFile />
          <FileName>skiper_locks_....sql</FileName>
          <MdExpandLess size={17} color="#7b7b7b" />
          <ShelfRule />
          <ShowAll>Show all</ShowAll>
          <MdClose size={18} color="#808080" />
        </Shelf>
      </Browser>
    </Desktop>
  );
}
